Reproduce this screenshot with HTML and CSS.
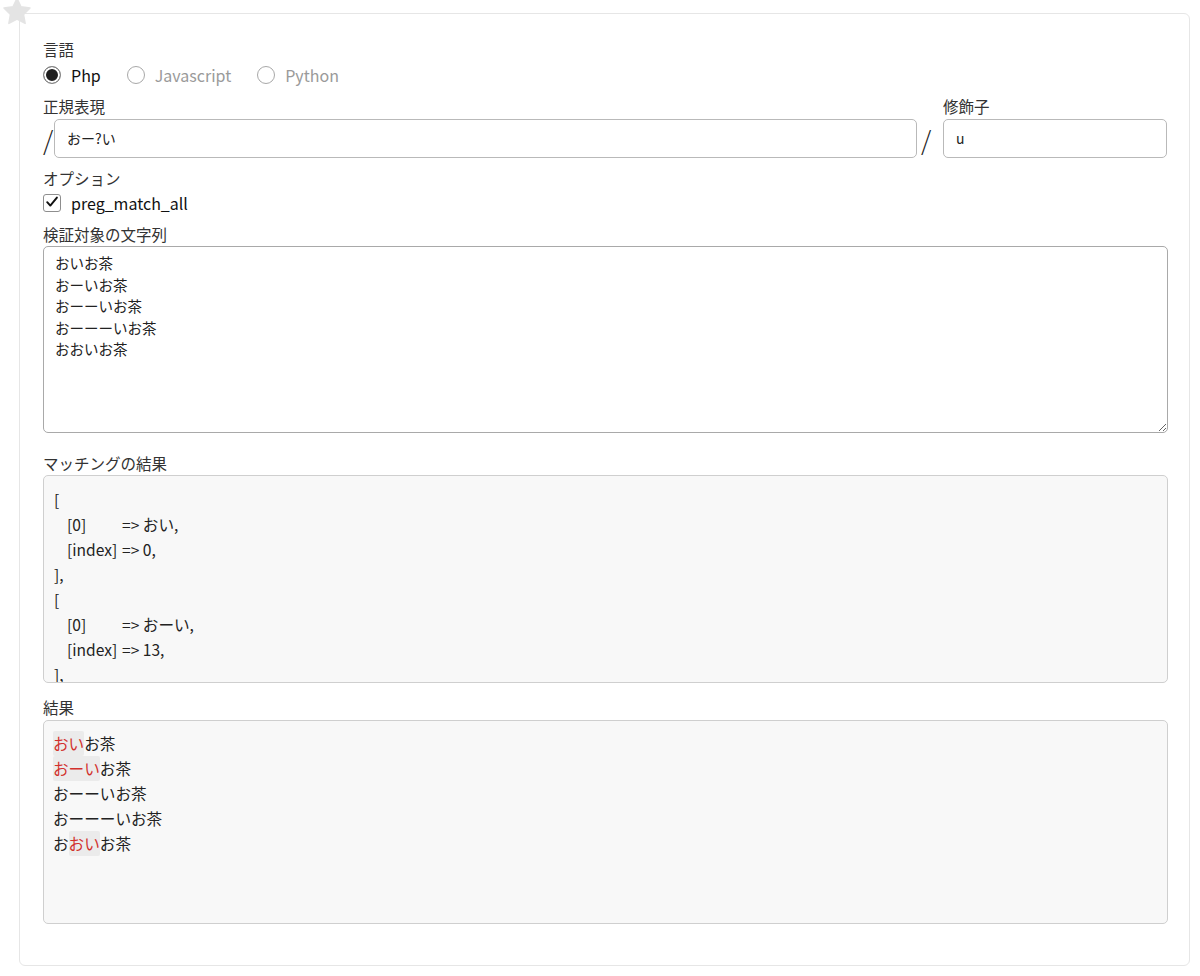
FILE: index.html
```html
<!DOCTYPE html>
<html lang="ja">
<head>
<meta charset="utf-8">
<title>正規表現チェッカー</title>
<link rel="stylesheet" href="styles.css">
</head>
<body>
<div class="page">
  <svg class="star" viewBox="0 0 24 24" width="30" height="30" aria-hidden="true">
    <path d="M12 1.2l3.2 6.6 7.2 1-5.2 5.1 1.3 7.2L12 17.7l-6.5 3.4 1.3-7.2L1.6 8.8l7.2-1z" fill="#e4e4e4" stroke="#e4e4e4" stroke-width="1.2" stroke-linejoin="round"/>
  </svg>
  <div class="card">
    <div class="label">言語</div>
    <div class="radios">
      <label class="radio checked"><span class="dot"></span><span class="rtext">Php</span></label>
      <label class="radio"><span class="dot"></span><span class="rtext">Javascript</span></label>
      <label class="radio"><span class="dot"></span><span class="rtext">Python</span></label>
    </div>

    <div class="regex-grid">
      <div class="label re-label">正規表現</div>
      <div class="label mod-label">修飾子</div>
      <span class="slash slash1">/</span>
      <div class="input re-input">おー?い</div>
      <span class="slash slash2">/</span>
      <div class="input mod-input">u</div>
    </div>

    <div class="label opt-label">オプション</div>
    <div class="check-row">
      <span class="checkbox"><svg viewBox="0 0 18 18" width="18" height="18"><path d="M3.6 9.2l3.5 3.8 7.4-9" fill="none" stroke="#111" stroke-width="2.2" stroke-linecap="round" stroke-linejoin="round"/></svg></span>
      <span class="ctext">preg_match_all</span>
    </div>

    <div class="label target-label">検証対象の文字列</div>
    <textarea class="target" readonly>おいお茶
おーいお茶
おーーいお茶
おーーーいお茶
おおいお茶</textarea>

    <div class="label match-label">マッチングの結果</div>
    <div class="matches">
      <div class="ln">[</div>
      <div class="ln in"><span class="key">[0]</span>=&gt; おい,</div>
      <div class="ln in"><span class="key">[index]</span>=&gt; 0,</div>
      <div class="ln">],</div>
      <div class="ln">[</div>
      <div class="ln in"><span class="key">[0]</span>=&gt; おーい,</div>
      <div class="ln in"><span class="key">[index]</span>=&gt; 13,</div>
      <div class="ln">],</div>
      <div class="ln">[</div>
      <div class="ln in"><span class="key">[0]</span>=&gt; おい,</div>
      <div class="ln in"><span class="key">[index]</span>=&gt; 37,</div>
      <div class="ln">],</div>
    </div>

    <div class="label result-label">結果</div>
    <div class="result">
      <div class="ln"><mark class="hit">おい</mark>お茶</div>
      <div class="ln"><mark class="hit">おーい</mark>お茶</div>
      <div class="ln">おーーいお茶</div>
      <div class="ln">おーーーいお茶</div>
      <div class="ln">お<mark class="hit">おい</mark>お茶</div>
    </div>
  </div>
</div>
</body>
</html>
```
FILE: styles.css
```css
* { box-sizing: border-box; }

html, body {
  margin: 0;
  padding: 0;
  background: #fff;
}

body {
  font-family: "Noto Sans CJK JP", "Noto Sans", sans-serif;
  color: #333;
}

.page {
  position: relative;
  padding: 13px 10px 10px 19px;
}

.star {
  position: absolute;
  left: 2px;
  top: -3px;
}

.card {
  width: 1171px;
  height: 953px;
  border: 1px solid #e6e6e6;
  border-radius: 6px;
  padding: 24px 22px 0 23px;
}

.label {
  font-size: 15.5px;
  line-height: 22px;
  height: 22px;
  color: #333;
}

.radios {
  display: flex;
  align-items: center;
  height: 30px;
}

.radio {
  display: flex;
  align-items: center;
  margin-right: 26px;
}

.dot {
  width: 18px;
  height: 18px;
  border-radius: 50%;
  border: 1px solid #a8a8a8;
  background: #fff;
  flex: none;
}

.radio.checked .dot {
  border-color: #8a8a8a;
  background: #1e1e1e;
  box-shadow: inset 0 0 0 2px #fff;
}

.rtext {
  margin-left: 10px;
  font-size: 16px;
  line-height: 22px;
  color: #9a9a9a;
}

.radio.checked .rtext {
  color: #111;
}

.regex-grid {
  margin-top: 5px;
  display: grid;
  grid-template-columns: 11px 863px 26px 224px;
  grid-template-rows: 24px 39px;
  align-items: center;
}

.re-label {
  grid-column: 1 / 3;
  grid-row: 1;
  align-self: start;
}

.mod-label {
  grid-column: 4;
  grid-row: 1;
  align-self: start;
}

.slash1 { grid-column: 1; grid-row: 2; }
.re-input { grid-column: 2; grid-row: 2; }
.slash2 { grid-column: 3; grid-row: 2; padding-left: 4px; }
.mod-input { grid-column: 4; grid-row: 2; }

.slash {
  font-family: "Noto Sans CJK JP", sans-serif;
  font-size: 26px;
  line-height: 39px;
  color: #222;
  font-weight: 200;
}

.input {
  height: 39px;
  border: 1px solid #b9b9b9;
  border-radius: 5px;
  padding: 0 12px;
  font-size: 14px;
  line-height: 37px;
  color: #222;
  background: #fff;
}

.opt-label {
  margin-top: 9px;
}

.check-row {
  display: flex;
  align-items: center;
  height: 27px;
}

.checkbox {
  width: 18px;
  height: 18px;
  border: 1px solid #8e8e8e;
  border-radius: 3px;
  display: flex;
  align-items: center;
  justify-content: center;
  flex: none;
}

.checkbox svg {
  display: block;
  margin-top: -2px;
}

.ctext {
  margin-left: 10px;
  font-size: 16px;
  line-height: 22px;
  color: #111;
}

.target-label {
  margin-top: 7px;
}

.target {
  display: block;
  width: 1125px;
  height: 187px;
  margin-top: 1px;
  border: 1px solid #a9a9a9;
  border-radius: 5px;
  padding: 5px 11px;
  font-family: "Noto Sans CJK JP", "Noto Sans", sans-serif;
  font-size: 14.5px;
  line-height: 21.6px;
  color: #222;
  resize: vertical;
  background: #fff;
  outline: none;
  overflow: hidden;
}

.match-label {
  margin-top: 19px;
}

.matches {
  width: 1125px;
  height: 208px;
  margin-top: 1px;
  border: 1px solid #cfcfcf;
  border-radius: 5px;
  background: #f8f8f8;
  padding: 11px 10px 0 10px;
  overflow: hidden;
  font-size: 15.6px;
  color: #222;
}

.ln {
  line-height: 25px;
  height: 25px;
  white-space: nowrap;
}

.in {
  padding-left: 13px;
}

.key {
  display: inline-block;
  width: 55px;
}

.result-label {
  margin-top: 13px;
}

.result {
  width: 1125px;
  height: 204px;
  margin-top: 2px;
  border: 1px solid #cfcfcf;
  border-radius: 5px;
  background: #f8f8f8;
  padding: 10px 9px 0 9px;
  font-size: 15.6px;
  color: #222;
}

.hit {
  background: #ebebeb;
  color: #d2302c;
  border-radius: 2px;
  padding: 1px 0 2px;
}
```
